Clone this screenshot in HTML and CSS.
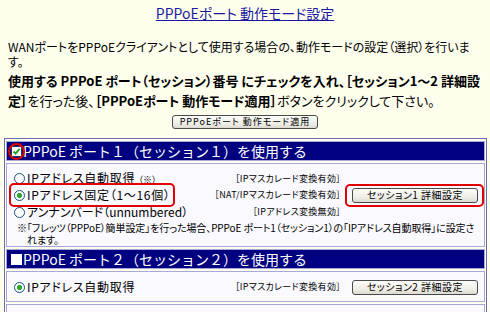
FILE: index.html
```html
<!DOCTYPE html>
<html lang="ja">
<head>
    <meta charset="UTF-8">
    <title>PPPoEポート 動作モード設定</title>
    <link rel="stylesheet" href="styles.css">
</head>
<body>
    <div class="page">
        <h1 class="title"><a href="#">PPPoEポート 動作モード設定</a></h1>

        <p class="intro">WANポートをPPPoEクライアントとして使用する場合の、動作モードの設定（選択）を行います。</p>
        <p class="howto"><b>使用する PPPoE ポート（セッション）番号 にチェックを入れ、［セッション1～2 詳細設定］</b>を行った後、<b>［PPPoEポート 動作モード適用］</b>ボタンをクリックして下さい。</p>

        <div class="apply">
            <button class="btn btn-apply">PPPoEポート 動作モード適用</button>
        </div>

        <div class="ports">
            <!-- port 1 -->
            <div class="port-head">
                <span class="mark-circle">
                    <span class="check">
                        <svg width="9" height="9" viewBox="0 0 9 9"><path d="M1.5 4.5 L3.6 6.6 L7.6 1.8" fill="none" stroke="#22a022" stroke-width="1.8"/></svg>
                    </span>
                </span>
                <span>PPPoE ポート１（セッション１）を使用する</span>
            </div>
            <div class="port-body">
                <div class="row">
                    <span class="opt wide"><span class="radio"></span>IPアドレス自動取得 <small>（※）</small></span>
                    <span class="mode">［IPマスカレード変換有効］</span>
                </div>
                <div class="row">
                    <span class="opt wide mark-box"><span class="radio on"></span>IPアドレス固定（1～16個）</span>
                    <span class="mode">［NAT/IPマスカレード変換有効］</span>
                    <span class="mark-box mark-btn"><button class="btn btn-session">セッション1 詳細設定</button></span>
                </div>
                <div class="row">
                    <span class="opt"><span class="radio"></span>アンナンバード（unnumbered）</span>
                    <span class="mode">［IPアドレス変換無効］</span>
                </div>
                <p class="note">※「フレッツ（PPPoE）簡単設定」を行った場合、PPPoE ポート1（セッション1）の「IPアドレス自動取得」に設定されます。</p>
            </div>

            <!-- port 2 -->
            <div class="port-head">
                <span class="check off"></span>
                <span>PPPoE ポート２（セッション２）を使用する</span>
            </div>
            <div class="port-body short">
                <div class="row">
                    <span class="opt wide"><span class="radio on"></span>IPアドレス自動取得</span>
                    <span class="mode">［IPマスカレード変換有効］</span>
                    <button class="btn btn-session">セッション2 詳細設定</button>
                </div>
            </div>

            <!-- port 3 (cut off) -->
            <div class="port-body cut"></div>
        </div>
    </div>
</body>
</html>
```

FILE: styles.css
```css
:root {
    --bg: #ffffee;
    --navy: #000080;
    --link: #1a1aa0;
    --cell-bg: #f9f9ff;
    --cell-border: #a8a8d8;
    --table-border: #6c6cb4;
    --mark: #e00000;
    --txt: #000;
}

body {
    margin: 0;
    padding: 0;
    background: var(--bg);
    color: var(--txt);
    font-family: "Noto Sans CJK JP", "Noto Sans", sans-serif;
    font-feature-settings: "palt";
    overflow: hidden;
}

.page {
    height: 312px;
}

.title {
    margin: 0;
    padding-top: 5px;
    text-align: center;
    font-size: 14px;
    font-weight: normal;
    line-height: 16px;
}

.title a {
    color: var(--link);
    text-decoration: underline;
}

.intro {
    margin: 18px 8px 0;
    font-size: 12px;
    line-height: 15px;
}

.howto {
    margin: 2px 8px 0;
    font-size: 13px;
    line-height: 20px;
}

.apply {
    display: flex;
    justify-content: center;
    margin-top: 4px;
}

.btn {
    font-family: "Noto Sans CJK JP", sans-serif;
    font-feature-settings: "palt";
    color: #000;
    background: linear-gradient(#fdfdfb, #ecebe4 70%, #dcdad0);
    border: 1px solid #4a4a4a;
    border-radius: 3px;
    padding: 0;
    line-height: 12px;
    cursor: pointer;
}

.btn-apply {
    width: 146px;
    height: 14px;
    font-size: 9px;
    letter-spacing: 1px;
}

.btn-session {
    width: 126px;
    height: 15px;
    font-size: 10px;
    letter-spacing: 0.5px;
}

.ports {
    margin: 9px 3px 0 4px;
    border: 1px solid var(--table-border);
    border-bottom: none;
    padding: 2px 1px 0;
    display: flex;
    flex-direction: column;
    gap: 2px;
}

.port-head {
    height: 20px;
    background: var(--navy);
    color: #fff;
    font-size: 14px;
    font-feature-settings: normal;
    line-height: 20px;
    display: flex;
    align-items: center;
    gap: 1px;
    padding-left: 4px;
    border: 1px solid var(--cell-border);
    box-sizing: border-box;
    white-space: nowrap;
}

.check {
    display: inline-flex;
    align-items: center;
    justify-content: center;
    width: 11px;
    height: 11px;
    background: #fff;
    border: 1px solid #1c3c70;
    box-sizing: border-box;
}

.check.off {
    border-color: #fff;
}

.port-body {
    background: var(--cell-bg);
    border: 1px solid var(--cell-border);
    padding: 6px 6px 0 7px;
    height: 84px;
    box-sizing: border-box;
}

.port-body.short {
    height: 31px;
    padding-top: 7px;
}

.port-body.cut {
    height: 12px;
    padding: 0;
}

.row {
    display: grid;
    grid-template-columns: 1fr auto 126px;
    column-gap: 11px;
    align-items: center;
    height: 16px;
    margin-bottom: 1px;
}

.opt {
    font-size: 12px;
    line-height: 16px;
    white-space: nowrap;
    justify-self: start;
}

.opt.wide {
    letter-spacing: 0.7px;
}

.opt small {
    font-size: 9px;
    letter-spacing: 0;
}

.radio {
    display: inline-block;
    width: 11px;
    height: 11px;
    margin-right: 2px;
    border: 1px solid #1c5180;
    border-radius: 50%;
    box-sizing: border-box;
    background: #fff;
    vertical-align: -1px;
}

.radio.on {
    background: radial-gradient(circle, #2fa82f 0 2.4px, #fff 2.9px);
}

.mode {
    font-size: 9px;
    line-height: 12px;
    letter-spacing: 0.3px;
    text-align: right;
    white-space: nowrap;
}

.note {
    margin: 2px 0 0 3px;
    padding-left: 10px;
    text-indent: -10px;
    font-size: 10px;
    line-height: 12px;
    letter-spacing: -0.1px;
}

/* red annotation marks drawn over the screenshot */
.mark-circle,
.mark-box {
    position: relative;
    display: inline-flex;
    align-items: center;
}

.mark-circle::after {
    content: "";
    position: absolute;
    left: -3px;
    top: -3px;
    width: 17px;
    height: 17px;
    border: 2px solid var(--mark);
    border-radius: 50%;
    box-sizing: border-box;
}

.mark-box::after {
    content: "";
    position: absolute;
    left: -5px;
    right: -4px;
    top: -4px;
    bottom: -4px;
    border: 2px solid var(--mark);
    border-radius: 5px;
}

.mark-btn::after {
    left: -7px;
    right: -6px;
}
```
